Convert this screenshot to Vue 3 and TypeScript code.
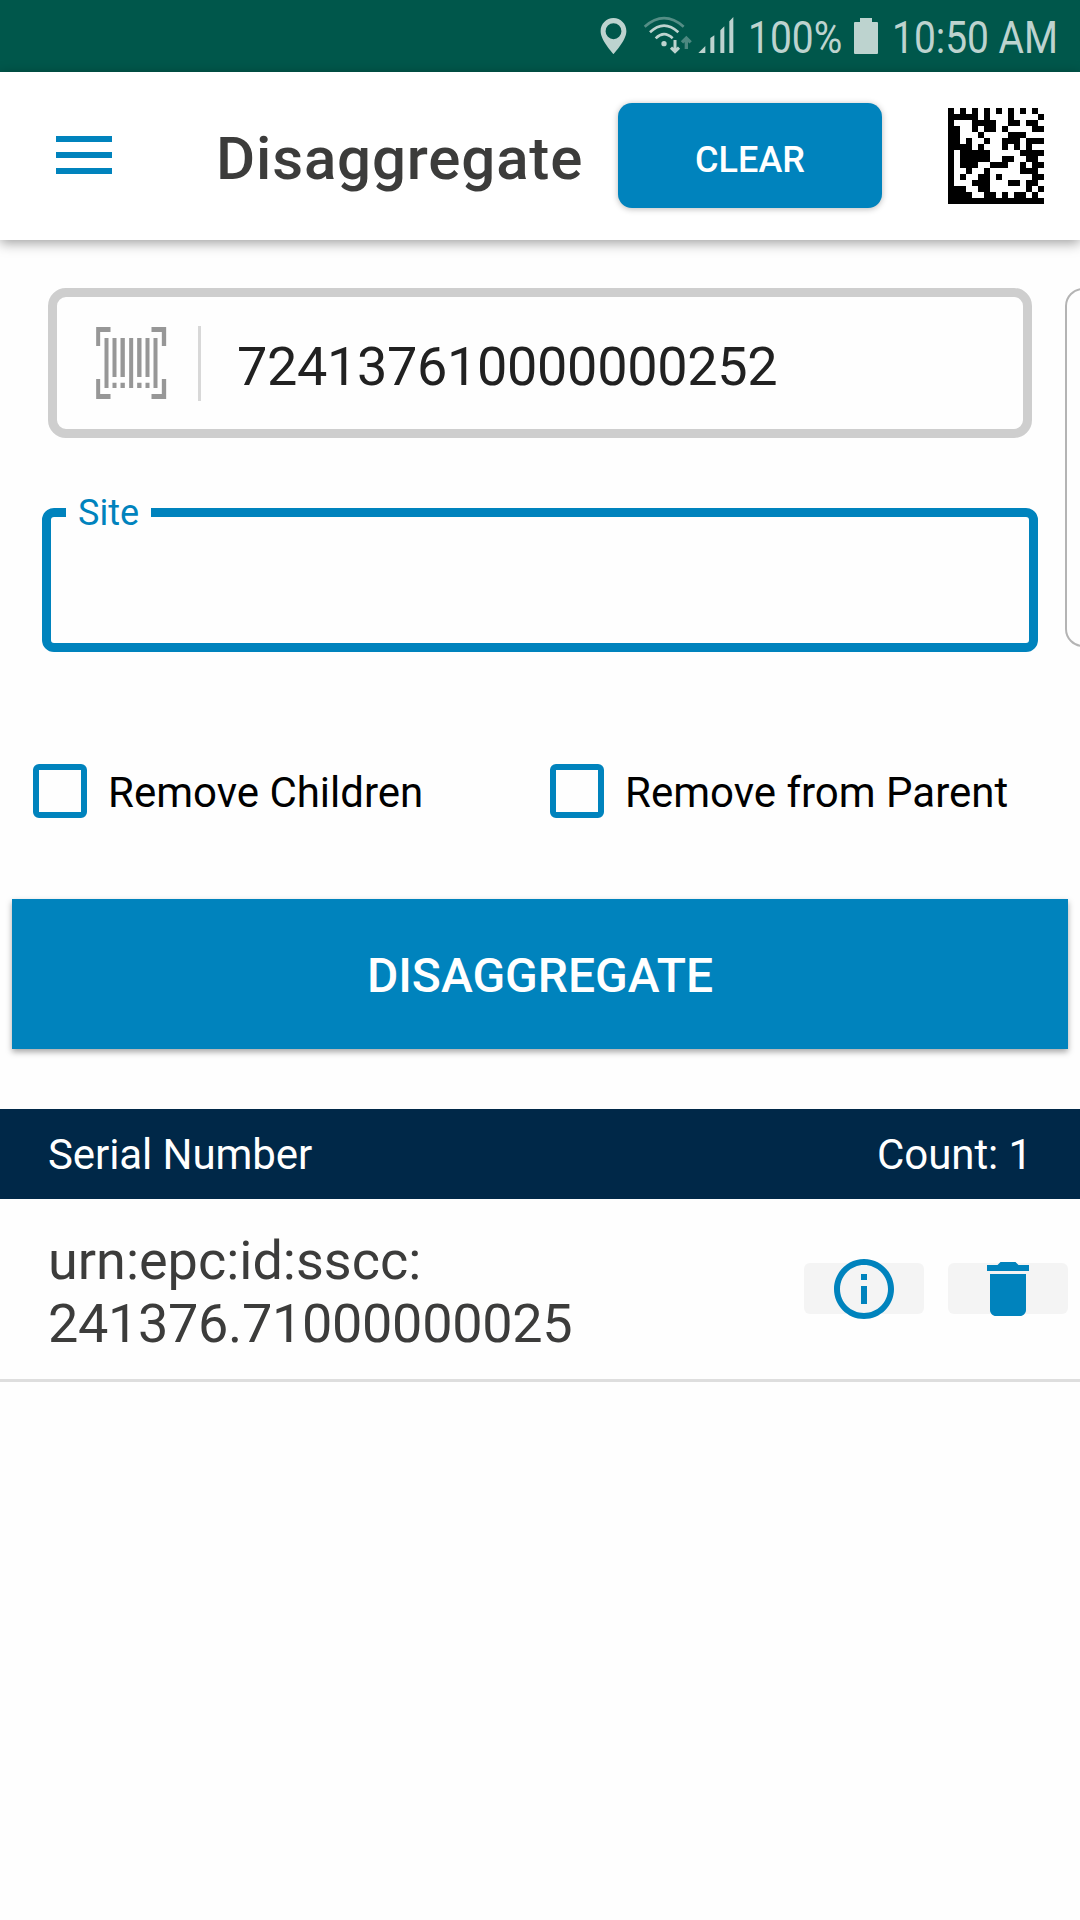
<script setup lang="ts">
import { ref } from 'vue'

interface Option {
  id: string
  label: string
}

interface SerialItem {
  prefix: string
  serial: string
}

const scanned = ref('724137610000000252')

const options: Option[] = [
  { id: 'children', label: 'Remove Children' },
  { id: 'parent', label: 'Remove from Parent' },
]

const items: SerialItem[] = [{ prefix: 'urn:epc:id:sscc:', serial: '241376.71000000025' }]

// One string per matrix row, 1 is a dark module
const matrix: string[] = [
  '1010101010101010',
  '1111101000100001',
  '1000111100110110',
  '1100101101000011',
  '1100010000111000',
  '1101001001110111',
  '1111010001010100',
  '1011111000001111',
  '1011111001100110',
  '1011100111001011',
  '1001001000001110',
  '1010011010000011',
  '1000111000110110',
  '1110011000000101',
  '1111001101011010',
  '1111111111111111',
]

const matrixPath = matrix
  .map((row, y) => [...row].map((m, x) => (m === '1' ? `M${x} ${y}h1v1h-1z` : '')).join(''))
  .join('')
</script>

<template>
  <div class="screen">
    <div class="status">
      <svg class="pin" viewBox="62 53 80 109" width="27" height="36">
        <path
          fill-rule="evenodd"
          d="M102 53C80 53 63 71 63 93c0 28 39 69 39 69s39-41 39-69c0-22-17-40-39-40zm0 16a24 24 0 1 1 0 48a24 24 0 0 1 0-48z"
        />
      </svg>
      <svg class="wifi" viewBox="190 48 150 114" width="50" height="38">
        <g fill="none" stroke="#bdd3cf">
          <path d="M195 80Q253 29 312 80" stroke-width="8" opacity=".45" />
          <path d="M211 97Q253 57 296 97" stroke-width="8" />
          <path d="M228 115Q253 90 279 115" stroke-width="8" />
          <path d="M286 120V154M274 143l12 12 12-12" stroke-width="9" />
          <path d="M320 147V115M307 127l13-13 13 13" stroke-width="10" opacity=".4" />
        </g>
        <circle cx="253" cy="131" r="8" />
      </svg>
      <svg class="signal" viewBox="356 50 108 109" width="36" height="36.33">
        <path d="M356 159l22-22v22zM393 159v-46l12-8v54zM423 159V90l12-12v81zM450 159V63l12-13v109z" />
      </svg>
      <span class="narrow percent"><span>100%</span></span>
      <svg class="battery" viewBox="0 0 24 36" width="24" height="36">
        <path d="M6 0h12v4h5q1 0 1 1v30q0 1-1 1H1q-1 0-1-1V5q0-1 1-1h5z" />
      </svg>
      <span class="narrow clock"><span>10:50 AM</span></span>
    </div>

    <header class="toolbar">
      <div class="burger"><i></i><i></i><i></i></div>
      <h1>Disaggregate</h1>
      <button class="clear">CLEAR</button>
      <svg class="matrix" viewBox="0 0 16 16" width="96" height="96">
        <path :d="matrixPath" fill="#000" />
      </svg>
    </header>

    <main>
      <div class="pager">
        <section class="page">
          <div class="scan">
            <svg class="barcode" viewBox="199.5 171 211 216" width="70.33" height="72">
              <path
                d="M200 171h43v15h-31v42h-12zM366 171h44v57h-13v-42h-31zM200 327h12v45h31v15h-43zM397 327h13v60h-44v-15h31z"
              />
              <path
                d="M225 204h12v150h-12zM249 204h12v117h-12zM249 338h12v16h-12zM273 204h13v117h-13zM273 338h13v16h-13zM299 204h12v150h-12zM323 204h13v117h-13zM323 338h13v16h-13zM348 204h12v117h-12zM348 338h12v16h-12zM372 204h12v150h-12z"
              />
            </svg>
            <span class="divider"></span>
            <span class="value">{{ scanned }}</span>
          </div>
          <fieldset class="site">
            <legend>Site</legend>
          </fieldset>
        </section>
        <section class="next"></section>
      </div>

      <div class="options">
        <label v-for="o in options" :key="o.id" class="option">
          <span class="box"></span>
          <span class="label">{{ o.label }}</span>
        </label>
      </div>

      <button class="submit">DISAGGREGATE</button>

      <div class="list-head">
        <span>Serial Number</span>
        <span>Count: {{ items.length }}</span>
      </div>
      <div v-for="item in items" :key="item.serial" class="row">
        <p>{{ item.prefix }}<br /><span class="digits">{{ item.serial }}</span></p>
        <div class="action">
          <svg viewBox="0 0 24 24" width="72" height="72">
            <path
              d="M11 17h2v-6h-2v6zm1-15C6.48 2 2 6.48 2 12s4.48 10 10 10 10-4.48 10-10S17.52 2 12 2zm0 18c-4.41 0-8-3.59-8-8s3.59-8 8-8 8 3.59 8 8-3.59 8-8 8zM11 9h2V7h-2v2z"
            />
          </svg>
        </div>
        <div class="action">
          <svg viewBox="0 0 24 24" width="72" height="72">
            <path
              d="M6 19c0 1.1.9 2 2 2h8c1.1 0 2-.9 2-2V7H6v12zM19 4h-3.5l-1-1h-5l-1 1H5v2h14V4z"
            />
          </svg>
        </div>
      </div>
    </main>
  </div>
</template>

<style>
body {
  margin: 0;
  background: #fefefe;
}
</style>

<style scoped>
.screen {
  width: 1080px;
  height: 1920px;
  overflow: hidden;
  background: #fefefe;
  font-family: Roboto, 'Liberation Sans', sans-serif;
}
.screen * {
  box-sizing: border-box;
}
svg {
  display: block;
  flex: none;
}
button {
  border: 0;
  padding: 0;
  font-family: inherit;
  font-weight: 500;
  color: #fff;
  background: #0083bd;
}
.status {
  display: flex;
  align-items: flex-start;
  height: 72px;
  padding-left: 600px;
  background: #00574b;
  color: #bdd3cf;
  fill: #bdd3cf;
}
.pin {
  margin-top: 18px;
}
.wifi {
  margin: 16px 0 0 16px;
}
.signal {
  margin: 17px 0 0 5px;
}
.narrow {
  flex: none;
  margin-top: 11px;
  font-size: 45px;
  line-height: 53px;
  white-space: nowrap;
}
.narrow span {
  display: inline-block;
  transform: scaleX(0.865);
  transform-origin: 0 0;
}
.percent {
  width: 98px;
  margin-left: 14px;
}
.battery {
  margin: 18px 0 0 8px;
}
.clock {
  width: 170px;
  margin-left: 14px;
}
.toolbar {
  position: relative;
  display: flex;
  align-items: flex-start;
  height: 168px;
  padding-left: 56px;
  background: #fff;
  box-shadow: 0 3px 12px rgba(0, 0, 0, 0.38);
}
.burger {
  display: flex;
  flex-direction: column;
  gap: 10px;
  width: 56px;
  margin-top: 64px;
}
.burger i {
  height: 6px;
  background: #0083bd;
}
h1 {
  width: 402px;
  margin: 51px 0 0 104px;
  font-size: 60px;
  line-height: 71px;
  letter-spacing: 0.85px;
  font-weight: 500;
  color: #3c3c3b;
}
.clear {
  width: 264px;
  height: 105px;
  margin-top: 31px;
  padding-top: 9px;
  border-radius: 14px;
  font-size: 36px;
  box-shadow: 0 1px 6px rgba(0, 0, 0, 0.28);
}
.matrix {
  margin: 36px 0 0 66px;
}
.pager {
  display: flex;
  height: 364px;
  margin-top: 48px;
}
.page {
  flex: none;
  width: 1065px;
  padding-left: 42px;
}
.scan {
  display: flex;
  width: 984px;
  height: 150px;
  margin-left: 6px;
  padding-left: 39.4px;
  border: 9px solid #cecece;
  border-radius: 18px;
}
.barcode {
  margin-top: 30px;
  fill: #979797;
}
.divider {
  width: 3px;
  height: 75px;
  margin: 29px 0 0 31.2px;
  background: #d8d8d8;
}
.value {
  margin: 38px 0 0 36px;
  font-size: 54px;
  line-height: 63px;
  letter-spacing: -0.33px;
  color: #212121;
}
.site {
  width: 996px;
  height: 165px;
  min-width: 0;
  margin: 49px 0 0;
  padding: 0 0 0 15px;
  border: 9px solid #0083bd;
  border-radius: 12px;
}
.site legend {
  width: 85px;
  height: 51px;
  padding: 0 0 0 12px;
  font-size: 36px;
  line-height: 53px;
  color: #0083bd;
}
.next {
  flex: none;
  width: 984px;
  height: 359px;
  border: 2px solid #b4b4b4;
  border-radius: 18px;
}
.options {
  display: flex;
  margin-top: 112px;
  padding-left: 33px;
}
.option {
  display: flex;
  align-items: center;
  width: 517px;
  height: 54px;
  font-size: 42px;
  line-height: 54px;
  color: #000;
}
.label {
  padding-top: 4px;
}
.box {
  width: 54px;
  height: 54px;
  margin-right: 21px;
  border: 6px solid #0083bd;
  border-radius: 6px;
}
.submit {
  display: block;
  width: 1056px;
  height: 150px;
  margin: 81px 12px 0;
  padding-top: 2px;
  font-size: 48px;
  box-shadow: 0 3px 6px rgba(0, 0, 0, 0.35);
}
.list-head {
  display: flex;
  justify-content: space-between;
  height: 90px;
  margin-top: 60px;
  padding: 0 48px;
  background: #002848;
  color: #fff;
  font-size: 42px;
  line-height: 92px;
  letter-spacing: -0.08px;
}
.row {
  display: flex;
  height: 183px;
  border-bottom: 3px solid #dedede;
}
.row p {
  width: 804px;
  margin: 30px 0 0;
  padding-left: 48px;
  font-size: 54px;
  line-height: 63px;
  color: #3c3c3b;
}
.digits {
  letter-spacing: -0.33px;
}
.action {
  display: flex;
  align-items: center;
  justify-content: center;
  width: 120px;
  height: 51px;
  margin: 64px 24px 0 0;
  border-radius: 6px;
  background: #f4f4f4;
  fill: #0083bd;
}
.action:last-child {
  margin-right: 0;
}
</style>
